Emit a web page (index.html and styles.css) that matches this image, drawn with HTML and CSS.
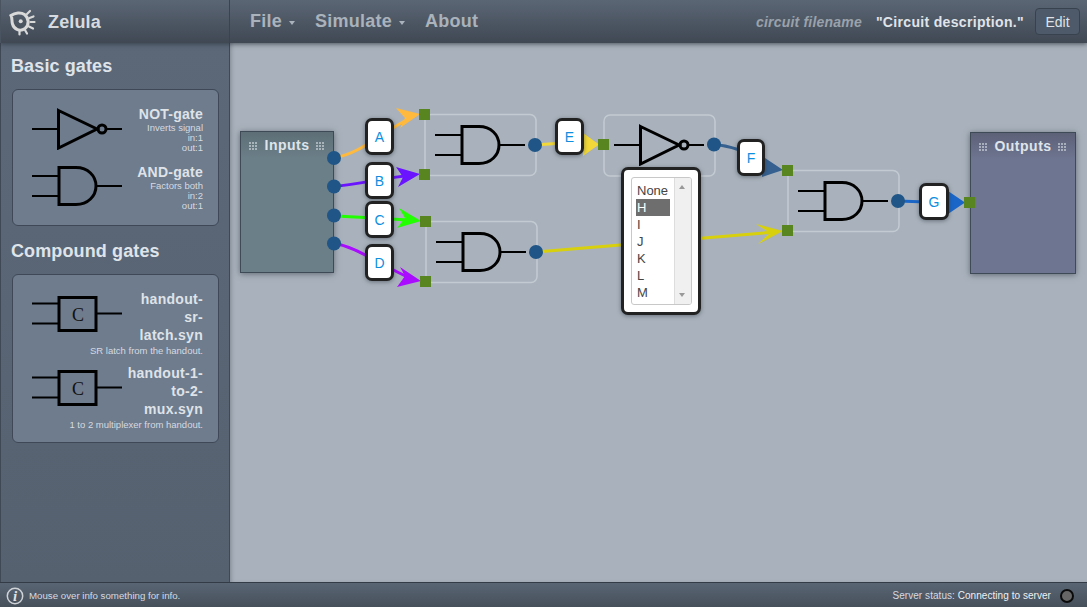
FILE: index.html
```html
<!DOCTYPE html>
<html lang="en">
<head>
<meta charset="utf-8">
<title>Zelula</title>
<link rel="stylesheet" href="styles.css">
</head>
<body>
<svg class="defs" width="0" height="0" aria-hidden="true">
  <defs>
    <symbol id="and" viewBox="0 0 90 40" width="90" height="40">
      <path class="lead" d="M0 10H27M0 30H27M64 20H90"/>
      <path class="body" d="M27 1.5H44C56 1.5 64 10 64 20C64 30 56 38.5 44 38.5H27Z"/>
    </symbol>
    <symbol id="not" viewBox="0 -1 90 42" width="90" height="42">
      <path class="lead" d="M0 20H26M74 20H90"/>
      <path class="body" d="M26.500 1.500L65 20L26.500 39Z"/>
      <circle class="body" cx="70" cy="20" r="4"/>
    </symbol>
    <symbol id="cmp" viewBox="0 0 90 40" width="90" height="40">
      <path class="lead" d="M0 7.500H27M0 27.500H27M64 17.500H90"/>
      <rect class="body" x="27" y="1.500" width="37" height="33"/>
      <text class="c-letter" x="46" y="24.500">C</text>
    </symbol>
  </defs>
</svg>
<div class="app">
  <header class="topbar">
    <div class="brand">
      <svg class="logo" width="28" height="28" viewBox="0 0 28 28">
        <path class="logo-eye" d="M2 7.500C6 4.500 12 4 15.500 6.500C20 10 20.500 17 16 20.500C11 24 5 21.500 3.500 16C2.500 13 3.500 10 2 7.500Z"/>
        <circle class="logo-dot" cx="11.700" cy="13.200" r="2"/>
        <path class="logo-ray" d="M18 6L21 3M20.500 10L24.500 8.500M21.500 14H25.500M20 18.500L24 20.500M16 22L18 25.500M10.500 23.500V26.500"/>
      </svg>
      <span class="brand-name">Zelula</span>
    </div>
    <nav class="menu">
      <span class="menu-item">File<i class="caret"></i></span>
      <span class="menu-item">Simulate<i class="caret"></i></span>
      <span class="menu-item">About</span>
    </nav>
    <div class="circuit">
      <span class="filename">circuit filename</span>
      <span class="description">"Circuit description."</span>
      <button class="edit">Edit</button>
    </div>
  </header>
  <main class="main">
    <aside class="sidebar">
      <h2 class="side-title">Basic gates</h2>
      <section class="palette">
        <div class="part">
          <svg class="part-icon" width="90" height="42"><use href="#not"/></svg>
          <div class="part-text">
            <div class="part-name">NOT-gate</div>
            <div class="part-sub">Inverts signal</div>
            <div class="part-sub">in:1</div>
            <div class="part-sub">out:1</div>
          </div>
        </div>
        <div class="part">
          <svg class="part-icon" width="90" height="40"><use href="#and"/></svg>
          <div class="part-text">
            <div class="part-name">AND-gate</div>
            <div class="part-sub">Factors both</div>
            <div class="part-sub">in:2</div>
            <div class="part-sub">out:1</div>
          </div>
        </div>
      </section>
      <h2 class="side-title">Compound gates</h2>
      <section class="palette compound">
        <div class="part">
          <svg class="part-icon" width="90" height="40"><use href="#cmp"/></svg>
          <div class="part-text">
            <div class="part-name wrap">handout-sr-latch.syn</div>
            <div class="part-sub">SR latch from the handout.</div>
          </div>
        </div>
        <div class="part">
          <svg class="part-icon" width="90" height="40"><use href="#cmp"/></svg>
          <div class="part-text">
            <div class="part-name wrap">handout-1-to-2-mux.syn</div>
            <div class="part-sub">1 to 2 multiplexer from handout.</div>
          </div>
        </div>
      </section>
    </aside>
    <section class="canvas">
      <div class="io inputs"><i class="grip"></i><span>Inputs</span><i class="grip"></i></div>
      <div class="io outputs"><i class="grip"></i><span>Outputs</span><i class="grip"></i></div>
      <svg class="wires" width="857" height="539" viewBox="230 43 857 539">
        <rect class="gatebox" x="425" y="114.500" width="111" height="61" rx="6"/>
        <rect class="gatebox" x="426" y="221.500" width="111" height="61" rx="6"/>
        <rect class="gatebox" x="604" y="115" width="111" height="61" rx="6"/>
        <rect class="gatebox" x="788" y="170.500" width="111" height="61" rx="6"/>
        <use href="#and" x="435" y="125"/>
        <use href="#and" x="436" y="232"/>
        <use href="#not" x="614" y="124"/>
        <use href="#and" x="798" y="181"/>

        <path class="wire w-a" d="M334 158C362 153 382 132 412 117"/>
        <path class="head h-a" d="M420 114L396 108L405 118L400 128Z"/>
        <path class="wire w-b" d="M334 186.500C360 184 385 178 412 175"/>
        <path class="head h-b" d="M420 174L396 167L403 177L398 187Z"/>
        <path class="wire w-c" d="M334 216C360 217 385 219 412 220"/>
        <path class="head h-c" d="M421 221L399 208L405 218L397 228Z"/>
        <path class="wire w-d" d="M334 243.500C355 246 380 265 412 279"/>
        <path class="head h-d" d="M421 281L400 267L405 276L397 287Z"/>
        <path class="wire w-e" d="M535 145L590 141"/>
        <path class="head h-e" d="M599 144.500L583 133L583 156Z"/>
        <path class="wire w-f" d="M714 144.500C735 146 755 155 775 167"/>
        <path class="head h-f" d="M783 170L762 156L762 177Z"/>
        <path class="wire w-g" d="M898 201L955 203"/>
        <path class="head h-g" d="M965 202.500L948 191L948 214Z"/>
        <path class="wire w-h" d="M536 252L775 232"/>
        <path class="head h-h" d="M783 231L756 224L770 233L758 244Z"/>

        <g class="ports">
          <circle cx="334" cy="158" r="7"/><circle cx="334" cy="186.500" r="7"/>
          <circle cx="334" cy="215.500" r="7"/><circle cx="334" cy="243.500" r="7"/>
          <circle cx="535" cy="145" r="7"/><circle cx="536" cy="252" r="7"/>
          <circle cx="714" cy="144.500" r="7"/><circle cx="898" cy="201" r="7"/>
        </g>
        <g class="pins">
          <rect x="419" y="109" width="11" height="11"/><rect x="419" y="169" width="11" height="11"/>
          <rect x="420" y="216" width="11" height="11"/><rect x="420" y="276" width="11" height="11"/>
          <rect x="598" y="139" width="11" height="11"/><rect x="782" y="165" width="11" height="11"/>
          <rect x="782" y="225" width="11" height="11"/><rect x="964" y="197" width="11" height="11"/>
        </g>
      </svg>
      <div class="tag tag-a">A</div>
      <div class="tag tag-b">B</div>
      <div class="tag tag-c">C</div>
      <div class="tag tag-d">D</div>
      <div class="tag tag-e">E</div>
      <div class="tag tag-f">F</div>
      <div class="tag tag-g">G</div>
      <div class="popup">
        <div class="listbox">
          <div class="options">
            <div class="option">None</div>
            <div class="option selected">H</div>
            <div class="option">I</div>
            <div class="option">J</div>
            <div class="option">K</div>
            <div class="option">L</div>
            <div class="option">M</div>
          </div>
          <div class="scrollbar"><i class="arrow-up"></i><i class="arrow-down"></i></div>
        </div>
      </div>
    </section>
  </main>
  <footer class="statusbar">
    <div class="info">
      <svg width="18" height="18" viewBox="0 0 18 18">
        <circle class="info-ring" cx="9" cy="9" r="7.700"/>
        <text class="info-i" x="9" y="14">i</text>
      </svg>
      <span class="info-text">Mouse over info something for info.</span>
    </div>
    <div class="server">
      <span class="server-text">Server status: <b class="server-state">Connecting to server</b></span>
      <i class="led"></i>
    </div>
  </footer>
</div>
</body>
</html>
```

FILE: styles.css
```css
html, body {
  margin: 0;
  height: 100%;
  overflow: hidden;
}
body {
  font-family: "Liberation Sans", Arial, sans-serif;
  color: #dfe4ea;
  background: #a9b2bc;
}
.defs { position: absolute; }
.app {
  display: flex;
  flex-direction: column;
  height: 607px;
}

/* top bar */
.topbar {
  position: relative;
  z-index: 3;
  flex: 0 0 43px;
  display: flex;
  align-items: center;
  box-sizing: border-box;
  background: linear-gradient(#5b6675, #3f4853);
  box-shadow: 0 1px 5px rgba(40, 48, 58, .7);
}
.brand {
  flex: 0 0 230px;
  box-sizing: border-box;
  height: 43px;
  display: flex;
  align-items: center;
  padding-left: 8px;
  border-right: 1px solid #3a4350;
  border-left: 1px solid #4a5461;
}
.logo { margin-right: 11px; }
.logo-eye { fill: none; stroke: #d9d9d9; stroke-width: 3; }
.logo-dot { fill: #d9d9d9; }
.logo-ray { fill: none; stroke: #d9d9d9; stroke-width: 2.200; stroke-linecap: round; }
.brand-name {
  font-size: 18px;
  font-weight: bold;
  letter-spacing: .15px;
  padding-top: 2px;
  color: #d7dbe0;
}
.menu {
  display: flex;
  gap: 20px;
  padding-left: 20px;
}
.menu-item {
  font-size: 18px;
  font-weight: bold;
  letter-spacing: .25px;
  color: #aab2bb;
  display: flex;
  align-items: center;
}
.caret {
  display: block;
  margin: 3px 0 0 7px;
  border-style: solid;
  border-width: 4px 3.500px 0;
  border-color: #aab2bb transparent transparent;
}
.circuit {
  margin-left: auto;
  display: flex;
  align-items: center;
  padding-right: 7px;
}
.filename {
  font-size: 14px;
  font-weight: bold;
  font-style: italic;
  letter-spacing: .2px;
  color: #9aa2ab;
  margin-right: 14px;
}
.description {
  font-size: 14px;
  font-weight: bold;
  letter-spacing: .33px;
  color: #e0e4e9;
  margin-right: 11px;
}
.edit {
  width: 45px;
  height: 27px;
  padding: 0;
  font: 14px "Liberation Sans", Arial, sans-serif;
  color: #dfe3e7;
  background: #4e5a69;
  border: 1px solid #38424e;
  border-radius: 4px;
}

/* main */
.main {
  flex: 1;
  display: flex;
  min-height: 0;
}
.sidebar {
  flex: 0 0 230px;
  box-sizing: border-box;
  padding: 13px 10px 0 11px;
  background: linear-gradient(#5c6878, #566170);
  border-right: 1px solid #3f4955;
  border-left: 1px solid #3f4955;
}
.side-title {
  margin: 0 0 0 -1px;
  font-size: 18px;
  font-weight: bold;
  letter-spacing: .12px;
  line-height: 21px;
  color: #dfe4ea;
}
.palette {
  box-sizing: border-box;
  margin: 12px 0 15px;
  width: 207px;
  height: 137px;
  padding: 15px 15px 0 19px;
  background: #6e7c8e;
  border: 1px solid #3e4856;
  border-radius: 6px;
}
.palette.compound {
  height: 169px;
  padding-top: 15px;
}
.part {
  display: flex;
  justify-content: space-between;
  align-items: flex-start;
  height: 58px;
}
.compound .part { height: 74px; }
.part-icon {
  flex: none;
  margin-top: 3px;
}
.compound .part-icon { margin-top: 6px; }
.part-text {
  display: flex;
  flex-direction: column;
  align-items: flex-end;
  width: 78px;
  text-align: right;
}
.part-name {
  font-size: 14px;
  font-weight: bold;
  letter-spacing: .25px;
  line-height: 18px;
  color: #dfe3e8;
  white-space: nowrap;
}
.part-name.wrap {
  white-space: normal;
  letter-spacing: .3px;
}
.part-sub {
  font-size: 9.500px;
  line-height: 10px;
  color: #d5dae0;
  white-space: nowrap;
}
.compound .part-sub { line-height: 14px; }
.lead { fill: none; stroke: #000; stroke-width: 2; }
.body { fill: none; stroke: #000; stroke-width: 3; }
.c-letter {
  font-family: "Liberation Serif", serif;
  font-size: 18px;
  fill: #111;
  text-anchor: middle;
}

/* canvas */
.canvas {
  position: relative;
  flex: 1;
  background: #a9b2bc;
  box-shadow: inset 3px 0 4px -2px rgba(60, 70, 80, .4);
  overflow: hidden;
}
.wires {
  position: absolute;
  left: 0;
  top: 0;
}
.gatebox { fill: none; stroke: #c3cad1; stroke-width: 1.500; }
.wire { fill: none; stroke-width: 3; }
.ports circle { fill: #1f5587; }
.pins rect { fill: #58851f; }
.w-a { stroke: #ffb93c; } .h-a { fill: #ffb93c; }
.w-b { stroke: #6a14ff; } .h-b { fill: #6a14ff; }
.w-c { stroke: #22ff00; } .h-c { fill: #22ff00; }
.w-d { stroke: #aa0cff; } .h-d { fill: #aa0cff; }
.w-e { stroke: #f2d838; } .h-e { fill: #f2d838; }
.w-f { stroke: #35608f; } .h-f { fill: #35608f; }
.w-g { stroke: #1a66c8; } .h-g { fill: #1a66c8; }
.w-h { stroke: #d8d00c; } .h-h { fill: #d8d00c; }

.io {
  position: absolute;
  box-sizing: border-box;
  height: 142px;
  display: flex;
  justify-content: space-between;
  align-items: flex-start;
  padding: 5px 8px 0;
  font-size: 14px;
  font-weight: bold;
  letter-spacing: .5px;
  line-height: 17px;
  color: #dfe4ea;
  border: 1px solid #3e4a56;
  box-shadow: 0 1px 6px rgba(50, 60, 70, .6);
}
.inputs {
  left: 10px;
  top: 88px;
  width: 94px;
  background: linear-gradient(#5d6e76, #6b7f88 26px);
}
.outputs {
  left: 740px;
  top: 89px;
  width: 106px;
  background: linear-gradient(#5d6178, #6e7590 26px);
}
.grip {
  display: block;
  width: 9px;
  height: 9px;
  margin-top: 5px;
  background-image: radial-gradient(circle at 1px 1px, rgba(225, 230, 235, .55) .8px, transparent 1px);
  background-size: 3px 3px;
}

.tag {
  position: absolute;
  box-sizing: border-box;
  width: 29px;
  height: 37px;
  display: flex;
  align-items: center;
  justify-content: center;
  font-size: 14px;
  color: #0d8fe0;
  background: #fff;
  border: 3px solid #222;
  border-radius: 7px;
  box-shadow: 0 1px 4px rgba(40, 50, 60, .5);
}
.tag-a { left: 135px; top: 75px; }
.tag-b { left: 135px; top: 119px; }
.tag-c { left: 135px; top: 158px; }
.tag-d { left: 135px; top: 201px; }
.tag-e { left: 325px; top: 75px; }
.tag-f { left: 507px; top: 96px; width: 28px; }
.tag-g { left: 689px; top: 140px; width: 30px; }

.popup {
  position: absolute;
  left: 391px;
  top: 124px;
  box-sizing: border-box;
  width: 80px;
  height: 148px;
  padding: 7px;
  background: #fff;
  border: 3px solid #222;
  border-radius: 7px;
  box-shadow: 0 1px 4px rgba(40, 50, 60, .5);
}
.listbox {
  display: flex;
  box-sizing: border-box;
  height: 128px;
  width: 61px;
  background: #fff;
  border: 1px solid #c8c8c8;
  border-radius: 3px;
  overflow: hidden;
}
.options {
  flex: 1;
  padding: 4px 4px 0 4px;
}
.option {
  font-size: 13px;
  line-height: 17px;
  padding-left: 1px;
  color: #444;
  width: 33px;
}
.option.selected {
  background: #6e6e6e;
  color: #fff;
}
.scrollbar {
  flex: 0 0 16px;
  position: relative;
  background: #f0f0f0;
  border-left: 1px solid #ddd;
}
.arrow-up, .arrow-down {
  position: absolute;
  left: 4px;
  border-style: solid;
  border-color: transparent;
}
.arrow-up {
  top: 7px;
  border-width: 0 3.500px 4px;
  border-bottom-color: #999;
}
.arrow-down {
  bottom: 7px;
  border-width: 4px 3.500px 0;
  border-top-color: #999;
}

/* status bar */
.statusbar {
  flex: 0 0 25px;
  box-sizing: border-box;
  display: flex;
  justify-content: space-between;
  align-items: center;
  padding: 1px 13px 0 6px;
  font-size: 10px;
  color: #d5dae0;
  background: linear-gradient(#5a6574, #46505b);
  border-top: 1px solid #333c46;
}
.info, .server {
  display: flex;
  align-items: center;
}
.info svg { margin-right: 5px; }
.info-text { font-size: 9.700px; }
.server-text { letter-spacing: .05px; }
.info-ring { fill: none; stroke: #cfd3d8; stroke-width: 1.500; }
.info-i {
  font-family: "Liberation Serif", serif;
  font-size: 15px;
  font-style: italic;
  font-weight: bold;
  fill: #dfe3e7;
  text-anchor: middle;
}
.server-state { font-weight: normal; color: #eef0f3; }
.led {
  display: block;
  box-sizing: border-box;
  width: 14px;
  height: 14px;
  margin-left: 9px;
  background: #666;
  border: 2px solid #0a0a0a;
  border-radius: 50%;
}
```
